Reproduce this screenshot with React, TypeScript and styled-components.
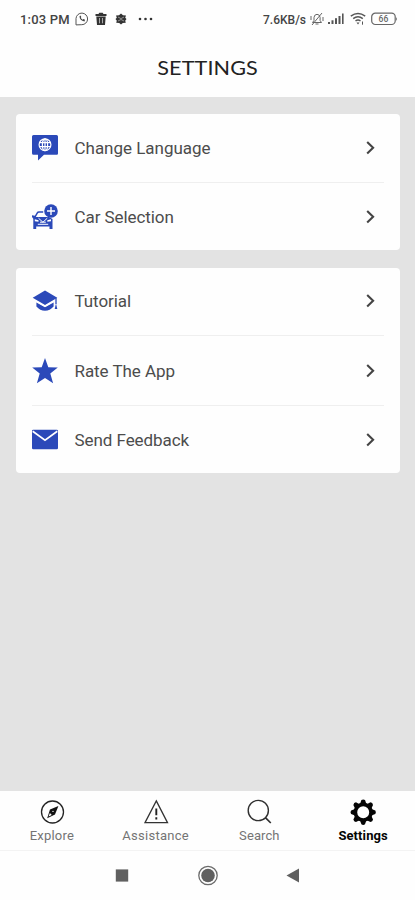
import React from "react";
import styled, { createGlobalStyle } from "styled-components";

const GlobalStyle = createGlobalStyle`
  * { box-sizing: border-box; }
  body { margin: 0; background: #fff; font-family: Roboto, sans-serif; }
`;

const Screen = styled.div`
  display: flex;
  flex-direction: column;
  width: 415px;
  height: 900px;
  background: #fefefe;
  overflow: hidden;
`;

const StatusBar = styled.header`
  display: flex;
  justify-content: space-between;
  align-items: center;
  height: 38px;
  padding: 0 17px 0 20px;
  color: #444;
`;

const StatusGroup = styled.div`
  display: flex;
  align-items: center;
`;

const StatusText = styled.span<{ $width: number; $size: number; $spacing: number }>`
  width: ${(p) => p.$width}px;
  padding-top: 1px;
  font-size: ${(p) => p.$size}px;
  font-weight: 500;
  letter-spacing: ${(p) => p.$spacing}px;
  line-height: 16px;
  white-space: nowrap;
`;

const Glyph = styled.svg<{ $gap?: number }>`
  display: block;
  flex: none;
  margin-left: ${(p) => p.$gap ?? 0}px;
`;

const TitleBar = styled.div`
  display: flex;
  justify-content: center;
  align-items: center;
  height: 59px;
  padding-bottom: 1px;
`;

const Title = styled.h1`
  margin: 0;
  font: 400 20px/24px Lato, sans-serif;
  letter-spacing: 0.1px;
  color: #222;
  transform: scaleX(1.08);
`;

const Content = styled.main`
  display: flex;
  flex-direction: column;
  gap: 18px;
  height: 694px;
  padding: 17px 15.5px 0 16px;
  background: #e3e3e3;
`;

const Card = styled.section`
  padding: 0 16px;
  border-radius: 4px;
  background: #fefefe;
`;

const Row = styled.button<{ $height: number; $last?: boolean }>`
  display: flex;
  align-items: center;
  width: 100%;
  height: ${(p) => p.$height}px;
  padding: ${(p) => (p.$last ? "1px" : "0")} 0 0;
  border: 0;
  border-bottom: ${(p) => (p.$last ? "0" : "1px solid #efefef")};
  background: none;
  text-align: left;
`;

const RowLabel = styled.span<{ $spacing: number }>`
  flex: 1;
  margin-left: 16.5px;
  font: 400 17px/22px Roboto, sans-serif;
  letter-spacing: ${(p) => p.$spacing}px;
  color: #4c4c4c;
`;

const TabBar = styled.nav`
  display: grid;
  grid-template-columns: repeat(4, 1fr);
  height: 60px;
  border-bottom: 1px solid #f3f3f3;
`;

const Tab = styled.button<{ $active?: boolean }>`
  display: flex;
  flex-direction: column;
  align-items: center;
  padding: 7px 0 0;
  border: 0;
  background: none;
  color: ${(p) => (p.$active ? "#050505" : "#747474")};
  font-weight: ${(p) => (p.$active ? 700 : 400)};
`;

const TabLabel = styled.span<{ $spacing: number }>`
  margin-top: 2px;
  font-family: Roboto, sans-serif;
  font-size: 13px;
  line-height: 16px;
  letter-spacing: ${(p) => p.$spacing}px;
`;

const SystemBar = styled.footer`
  display: flex;
  justify-content: center;
  align-items: center;
  gap: 67.5px;
  height: 49px;
`;

const BLUE = "#2b49b9";

const LanguageIcon = () => (
  <Glyph width="26" height="26" viewBox="0 0 26 26">
    <path d="M1.5 0h23A1.5 1.5 0 0 1 26 1.5v17a1.2 1.2 0 0 1-1.2 1.2H12L6 25.5V19.7H1.5A1.5 1.5 0 0 1 0 18.2V1.5A1.5 1.5 0 0 1 1.5 0Z" fill={BLUE} />
    <g fill="none" stroke="#fff" strokeWidth="1.2">
      <circle cx="13" cy="9.7" r="5.9" />
      <ellipse cx="13" cy="9.7" rx="2.6" ry="5.9" />
      <path d="M7.6 7.7h10.8M7.6 11.7h10.8M13 3.8v11.8" />
    </g>
  </Glyph>
);

const CarIcon = () => (
  <Glyph width="26" height="26" viewBox="0 0 26 26">
    <circle cx="19" cy="7" r="6.8" fill={BLUE} />
    <path d="M19 3v8M15 7h8" stroke="#fff" strokeWidth="1.4" />
    <path d="M3 13 5.2 9.1Q5.8 8 7 8h4.2" fill="none" stroke={BLUE} strokeWidth="1.5" />
    <path d="M0 11.3 3 11.8 3.5 13H17l3.5 2v10h-3v-2.5H4.2V25H1.3V14.8L0 13Z" fill={BLUE} />
    <path d="m2.8 15.2 3.7 1v1.6l-3.7-.6ZM19 15.2l-3.7 1v1.6l3.7-.6Z" fill="#fff" />
    <path d="m6.5 14.2 4.4 4 4.4-4M5.8 20.3h10.4M8 18.2h5.8" fill="none" stroke="#fff" strokeWidth="1" />
  </Glyph>
);

const TutorialIcon = () => (
  <Glyph width="26" height="26" viewBox="0 0 26 26">
    <path d="M13 2.6 25.3 9.7 13 17 .7 9.7Z" fill={BLUE} />
    <path d="M4.4 14.4 13 19.2l8.6-4.8v4Q18 22.5 13 22.8 8 22.5 4.4 18.4Z" fill={BLUE} />
    <path d="M3.6 12.8 13 18.2l9.4-5.4" fill="none" stroke="#fff" strokeWidth="1.2" />
    <path d="M24 10v6" stroke={BLUE} strokeWidth="1.3" />
    <path d="M24 15.5 25.3 21h-2.6Z" fill={BLUE} />
  </Glyph>
);

const StarIcon = () => (
  <Glyph width="26" height="26" viewBox="0 0 26 26">
    <path d="m13 0 3.3 9.3 9.5.2-7.5 6.1 2.8 9.7L13 19.9l-8.1 5.4 2.8-9.7L.2 9.5l9.5-.2Z" fill={BLUE} />
  </Glyph>
);

const MailIcon = () => (
  <Glyph width="26" height="26" viewBox="0 0 26 26">
    <rect y="2.7" width="26" height="19.5" rx="1.2" fill={BLUE} />
    <path d="m.7 4.3 12.3 8.8 12.3-8.8" fill="none" stroke="#fff" strokeWidth="1.7" />
  </Glyph>
);

const Chevron = () => (
  <Glyph width="26" height="26" viewBox="0 0 26 26">
    <path d="m9.2 7.1 5.9 5.7-5.9 5.7" fill="none" stroke="#444" strokeWidth="2.1" />
  </Glyph>
);

type Item = { label: string; icon: React.ReactNode; height: number; spacing: number };

const groups: Item[][] = [
  [
    { label: "Change Language", icon: <LanguageIcon />, height: 68.5, spacing: -0.02 },
    { label: "Car Selection", icon: <CarIcon />, height: 67, spacing: -0.08 },
  ],
  [
    { label: "Tutorial", icon: <TutorialIcon />, height: 68.5, spacing: -0.08 },
    { label: "Rate The App", icon: <StarIcon />, height: 70, spacing: -0.06 },
    { label: "Send Feedback", icon: <MailIcon />, height: 67, spacing: -0.06 },
  ],
];

const ExploreIcon = () => (
  <Glyph width="28" height="28" viewBox="0 0 28 28">
    <circle cx="14.5" cy="14" r="11" fill="none" stroke="#242424" strokeWidth="1.3" />
    <path d="m20.4 8.1-3.4 8.5-7.8 3.6 2.8-8.6Z" fill="#111" />
    <path d="m10.6 18.5 1.3-3.4 1.9 1.9Z" fill="#fff" />
    <circle cx="15" cy="13.4" r=".7" fill="#fff" />
  </Glyph>
);

const AssistanceIcon = () => (
  <Glyph width="28" height="28" viewBox="0 0 28 28">
    <path d="M14.3 2.9 25.5 24.6H3Z" fill="none" stroke="#333" strokeWidth="1.3" />
    <path d="M14.3 10.5v6.8M14.3 19.2v2.2" stroke="#222" strokeWidth="1.9" />
  </Glyph>
);

const SearchIcon = () => (
  <Glyph width="28" height="28" viewBox="0 0 28 28">
    <circle cx="13.3" cy="12.5" r="10.1" fill="none" stroke="#303030" strokeWidth="1.4" />
    <path d="m20.4 19.6 5.4 5.4" stroke="#303030" strokeWidth="1.7" />
  </Glyph>
);

const SettingsIcon = () => (
  <Glyph width="28" height="28" viewBox="0 0 28 28">
    <g fill="#050505">
      {[0, 45, 90, 135, 180, 225, 270, 315].map((angle) => (
        <path key={angle} d="M11 6 12.4 2.1Q14.2.9 16 2.1L17.4 6Z" transform={`rotate(${angle} 14.2 14.2)`} />
      ))}
    </g>
    <circle cx="14.2" cy="14.2" r="7.8" fill="none" stroke="#050505" strokeWidth="3.6" />
  </Glyph>
);

const tabs = [
  { label: "Explore", icon: <ExploreIcon />, spacing: 0.2 },
  { label: "Assistance", icon: <AssistanceIcon />, spacing: 0.27 },
  { label: "Search", icon: <SearchIcon />, spacing: 0.1 },
  { label: "Settings", icon: <SettingsIcon />, spacing: 0.1, active: true },
];

const NotificationIcons = () => (
  <>
    <Glyph $gap={5} width="14" height="14" viewBox="0 0 14 14" fill="none" stroke="#555">
      <path d="M1 12.9V6.5a5.8 5.8 0 1 1 5.8 6.2Z" strokeWidth="1" />
      <path d="M4.5 4.2Q4.6 8.6 9.5 9.4L10 7.8 8.5 7 7.5 7.8 5.8 6 6.3 5 5.5 3.5Z" fill="#444" stroke="none" />
    </Glyph>
    <Glyph $gap={6} width="12" height="14" viewBox="0 0 12 14">
      <path d="M.5 2h3L4.3.8h3.4L8.5 2h3v2H.5ZM1.3 4.5h9.4L10 13H2Z" fill="#333" />
      <path d="M4.5 6v5.3M7.5 6v5.3" stroke="#aaa" />
    </Glyph>
    <Glyph $gap={8} width="12" height="14" viewBox="0 0 12 14">
      <path d="m6 1.5 2 1.8 3 .1-.8 2.4L11.5 7l-1.3 1.7.6 2-3 .2L6 12.5l-1.8-1.6-3-.2.6-2L.5 7l1.3-1.2L1 3.4l3-.1Z" fill="#333" />
      <path d="m3 5 3 1.6L9 5M3 9l3-1.5L9 9" stroke="#aaa" fill="none" strokeWidth=".8" />
    </Glyph>
    <Glyph $gap={11} width="16" height="14" viewBox="0 0 16 14" fill="#333">
      <circle cx="2" cy="7" r="1.3" />
      <circle cx="7.5" cy="7" r="1.3" />
      <circle cx="13" cy="7" r="1.3" />
    </Glyph>
  </>
);

const ConnectivityIcons = () => (
  <>
    <Glyph $gap={3} width="14" height="14" viewBox="0 0 14 14" fill="none" stroke="#666">
      <path d="M2.5 10.5 4 8.5V5.5Q4.2 2.5 7 2.3q3 .2 3.1 3.2v3l1.4 2ZM5.5 12h3M12 1 2 13M1 4v4M13 5v4" />
    </Glyph>
    <Glyph $gap={4} width="17" height="14" viewBox="0 0 17 14" fill="#555">
      <rect x="0" y="10" width="2" height="2" />
      <rect x="3.5" y="8.3" width="2" height="3.7" />
      <rect x="7" y="6.2" width="2" height="5.8" />
      <rect x="10.5" y="4" width="2" height="8" />
      <rect x="14" y="1.5" width="1.6" height="10.5" />
    </Glyph>
    <Glyph $gap={5} width="16" height="14" viewBox="0 0 16 14" fill="none" stroke="#555" strokeWidth="1.5">
      <path d="M.8 4.2Q8-1.1 15.2 4.2M3.2 6.7Q8 3 12.8 6.7M5.5 9Q8 7 10.5 9" />
      <path d="m6.5 10.4 1.5 2 1.5-2Z" fill="#555" stroke="none" />
      <path d="M12.5 9.5v3.2" strokeWidth="1" />
    </Glyph>
    <Glyph $gap={5} width="27" height="14" viewBox="0 0 27 14">
      <rect x=".7" y="1.2" width="23.5" height="11.3" rx="3.6" fill="none" stroke="#666" strokeWidth="1.2" />
      <path d="M25.2 5q1.7 2 0 4Z" fill="#555" />
      <text x="12.4" y="10" textAnchor="middle" fontFamily="Roboto, sans-serif" fontSize="8.5" fontWeight="500" fill="#666">66</text>
    </Glyph>
  </>
);

export default function App() {
  return (
    <Screen>
      <GlobalStyle />
      <StatusBar>
        <StatusGroup>
          <StatusText $width={50} $size={13} $spacing={0.2}>1:03 PM</StatusText>
          <NotificationIcons />
        </StatusGroup>
        <StatusGroup>
          <StatusText $width={44} $size={12} $spacing={0}>7.6KB/s</StatusText>
          <ConnectivityIcons />
        </StatusGroup>
      </StatusBar>
      <TitleBar>
        <Title>SETTINGS</Title>
      </TitleBar>
      <Content>
        {groups.map((items) => (
          <Card key={items[0].label}>
            {items.map((item, i) => (
              <Row key={item.label} $height={item.height} $last={i === items.length - 1}>
                {item.icon}
                <RowLabel $spacing={item.spacing}>{item.label}</RowLabel>
                <Chevron />
              </Row>
            ))}
          </Card>
        ))}
      </Content>
      <TabBar>
        {tabs.map((tab) => (
          <Tab key={tab.label} $active={tab.active}>
            {tab.icon}
            <TabLabel $spacing={tab.spacing}>{tab.label}</TabLabel>
          </Tab>
        ))}
      </TabBar>
      <SystemBar>
        <Glyph width="14" height="22" viewBox="0 0 14 22">
          <rect x=".8" y="4.4" width="12.4" height="12.2" fill="#606060" />
        </Glyph>
        <Glyph width="22" height="22" viewBox="0 0 22 22">
          <circle cx="11" cy="10.5" r="9.2" fill="none" stroke="#6b6b6b" strokeWidth="1.3" />
          <circle cx="11" cy="10.5" r="6.8" fill="#606060" />
        </Glyph>
        <Glyph width="14" height="22" viewBox="0 0 14 22">
          <path d="M.5 10.5 13 3.5v14Z" fill="#606060" />
        </Glyph>
      </SystemBar>
    </Screen>
  );
}
